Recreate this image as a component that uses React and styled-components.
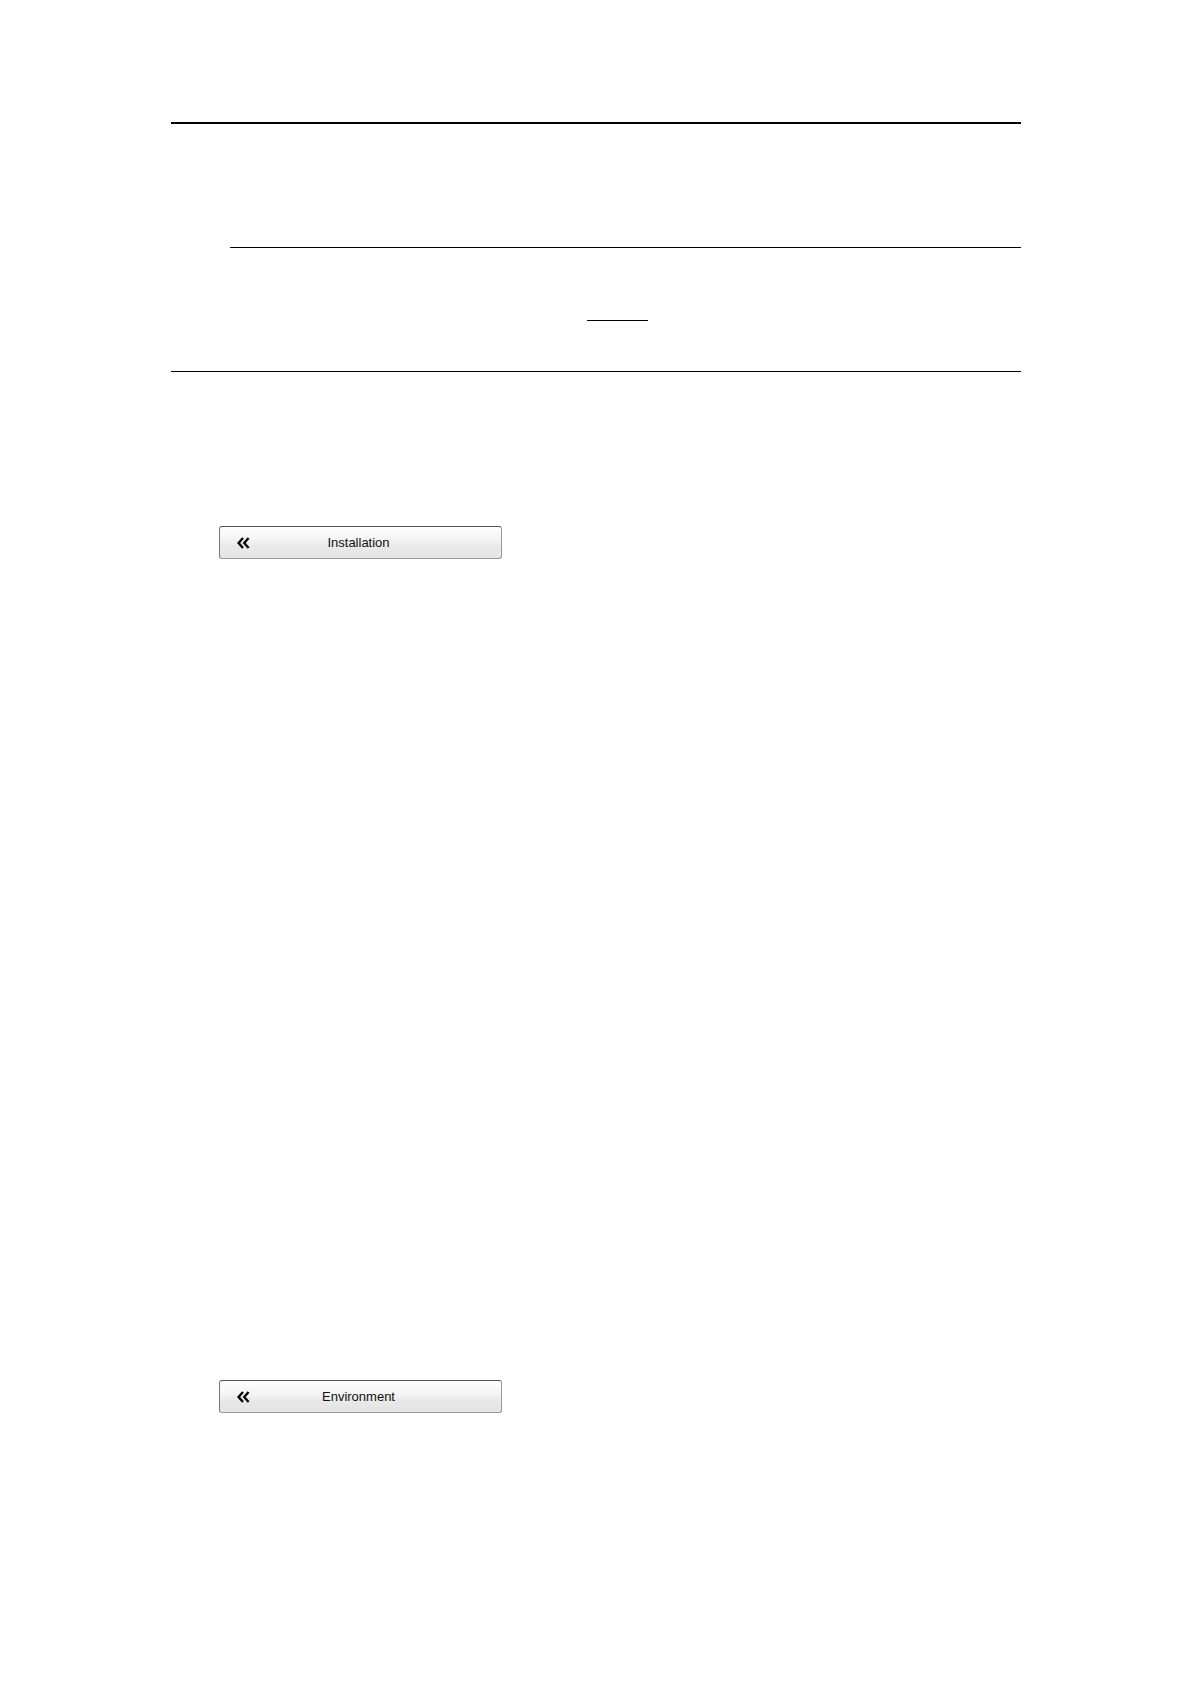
import React from "react";
import styled, { createGlobalStyle } from "styled-components";

const GlobalStyle = createGlobalStyle`
  * {
    box-sizing: border-box;
  }

  body {
    margin: 0;
    background: white;
    font-family: "Liberation Sans", Arial, sans-serif;
  }
`;

const Page = styled.main`
  display: flex;
  flex-direction: column;
  min-height: 100vh;
  padding: 122px 170px 271px 171px;
`;

const Header = styled.header`
  display: flex;
  flex-direction: column;
`;

const Rule = styled.hr`
  width: ${(props) => props.$width || "auto"};
  height: ${(props) => props.$thickness || 1}px;
  margin: ${(props) => props.$top || 0}px 0 0 ${(props) => props.$indent || 0}px;
  border: none;
  background: black;
`;

const Menu = styled.nav`
  display: flex;
  flex-direction: column;
  align-items: flex-start;
  gap: 821px;
  padding: 154px 0 0 48px;
`;

const Button = styled.button`
  display: grid;
  grid-template-columns: 14px 1fr 14px;
  align-items: center;
  width: 283px;
  height: 33px;
  padding: 0 20px 0 16px;
  border: 1px solid #999;
  border-top-color: #555;
  border-left-color: #777;
  border-radius: 3px;
  background: linear-gradient(#fefefe 0%, #f3f3f3 45%, #e9e9e9 60%, #e5e5e5 100%);
  color: #111;
  font-family: inherit;
  font-size: 13px;
  line-height: 16px;
  text-align: center;
  cursor: pointer;
`;

const Icon = styled.svg`
  display: block;
  width: 14px;
  height: 14px;
  fill: none;
  stroke: #080808;
  stroke-width: 2.4;
`;

const BackIcon = () => (
  <Icon viewBox="0 0 14 14" aria-hidden="true">
    <path d="M7 2 L2.6 7 L7 12 M12.6 2 L8.2 7 L12.6 12" />
  </Icon>
);

const BackButton = ({ label }) => (
  <Button type="button">
    <BackIcon />
    <span>{label}</span>
  </Button>
);

const App = () => {
  return (
    <>
      <GlobalStyle />
      <Page>
        <Header>
          <Rule $thickness={2} />
          <Rule $top={123} $indent={59} />
          <Rule $top={72} $indent={416} $width="61px" />
          <Rule $top={50} />
        </Header>
        <Menu>
          <BackButton label="Installation" />
          <BackButton label="Environment" />
        </Menu>
      </Page>
    </>
  );
};

export default App;
